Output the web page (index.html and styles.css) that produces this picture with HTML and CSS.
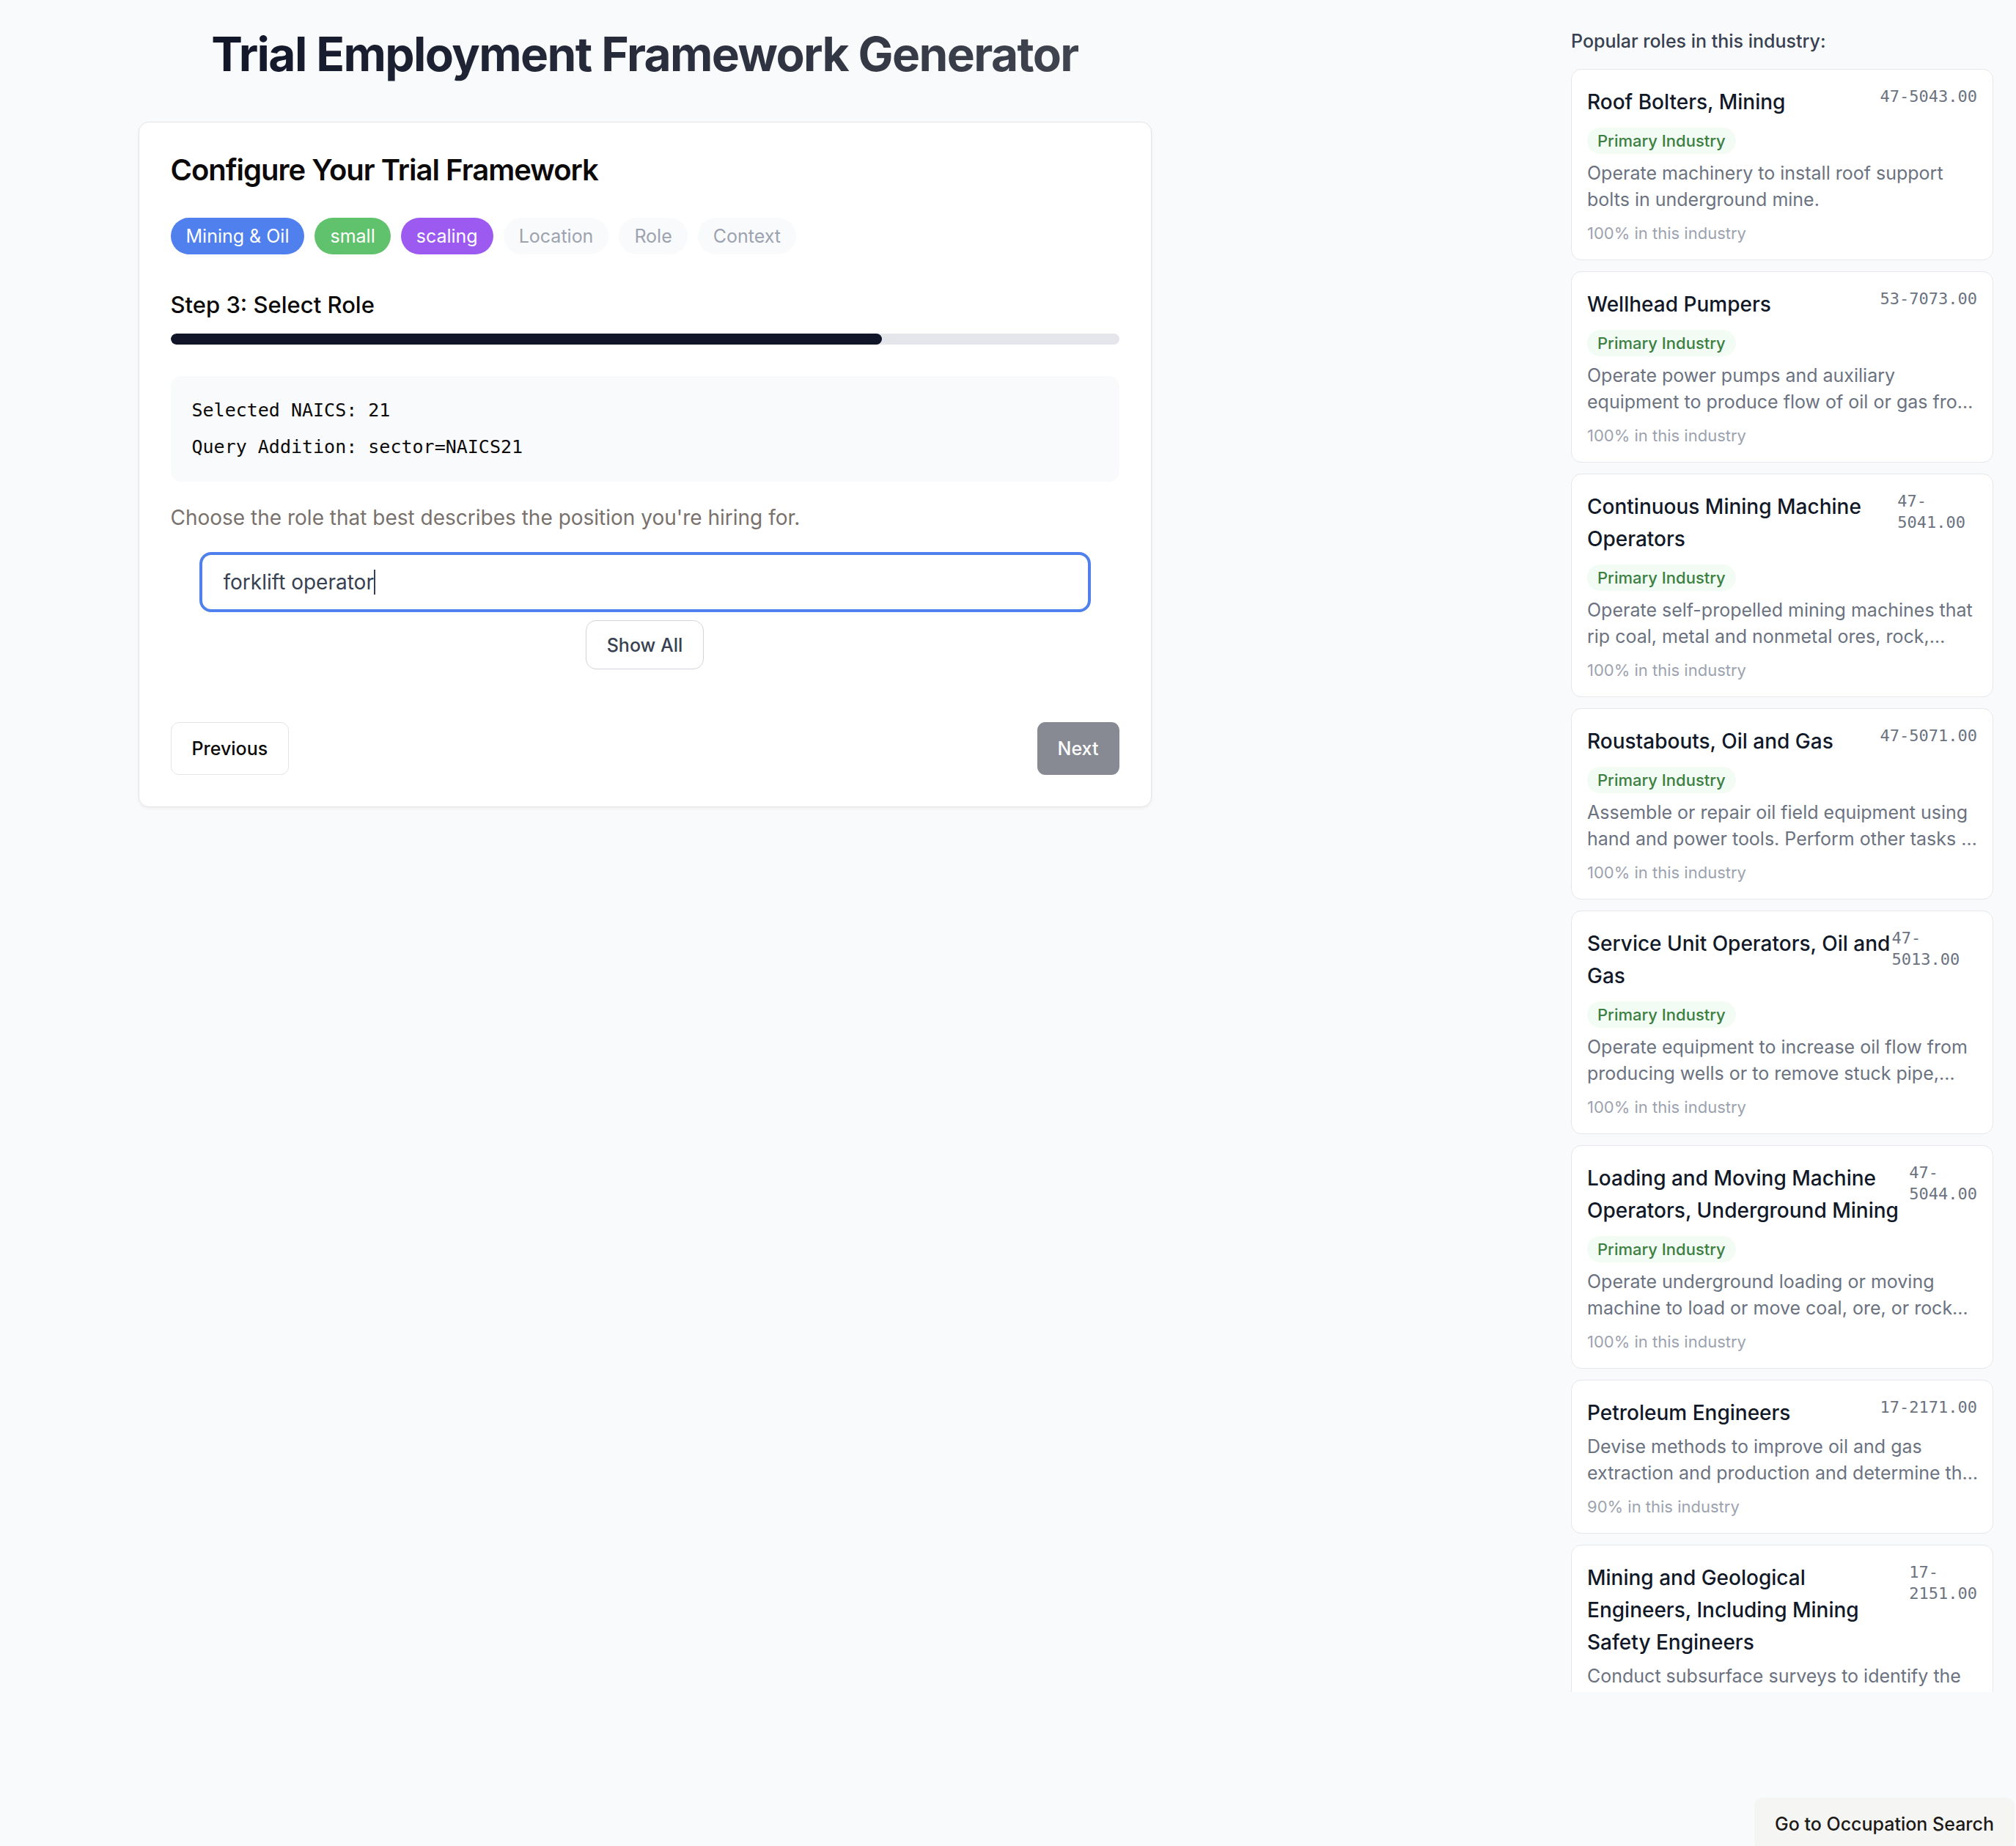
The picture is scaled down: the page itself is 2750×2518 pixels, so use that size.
FILE: index.html
```html
<!DOCTYPE html>
<html lang="en">
<head>
<meta charset="utf-8">
<meta name="viewport" content="width=device-width, initial-scale=1">
<title>Trial Employment Framework Generator</title>
<link rel="stylesheet" href="styles.css">
</head>
<body>
<div class="page">
  <main class="main">
    <h1 class="page-title">Trial Employment Framework Generator</h1>
    <section class="card">
      <h2 class="card-title">Configure Your Trial Framework</h2>
      <ul class="chips">
        <li class="chip chip-blue">Mining &amp; Oil</li>
        <li class="chip chip-green">small</li>
        <li class="chip chip-purple">scaling</li>
        <li class="chip">Location</li>
        <li class="chip">Role</li>
        <li class="chip">Context</li>
      </ul>
      <h3 class="step-title">Step 3: Select Role</h3>
      <div class="progress" role="progressbar" aria-label="Progress" aria-valuenow="75" aria-valuemin="0" aria-valuemax="100">
        <div class="progress-fill" style="width: 75%"></div>
      </div>
      <div class="query">
        <p>Selected NAICS: 21</p>
        <p>Query Addition: sector=NAICS21</p>
      </div>
      <label class="hint" for="role">Choose the role that best describes the position you're hiring for.</label>
      <div class="search">
        <div class="search-field">
          <input class="search-input" id="role" type="text" value="forklift operator" autocomplete="off" spellcheck="false">
          <span class="caret"></span>
        </div>
        <button class="btn btn-show" type="button">Show All</button>
      </div>
      <div class="actions">
        <button class="btn btn-outline" type="button">Previous</button>
        <button class="btn btn-primary" type="button" disabled>Next</button>
      </div>
    </section>
  </main>
  <aside class="sidebar">
    <h2 class="sidebar-title">Popular roles in this industry:</h2>
    <ul class="roles">
      <li><button class="role" type="button">
        <span class="role-head"><span class="role-name">Roof Bolters, Mining</span><span class="role-code">47-5043.00</span></span>
        <span class="badge">Primary Industry</span>
        <span class="role-text">Operate machinery to install roof support bolts in underground mine.</span>
        <span class="role-share">100% in this industry</span>
      </button></li>
      <li><button class="role" type="button">
        <span class="role-head"><span class="role-name">Wellhead Pumpers</span><span class="role-code">53-7073.00</span></span>
        <span class="badge">Primary Industry</span>
        <span class="role-text">Operate power pumps and auxiliary equipment to produce flow of oil or gas fro…</span>
        <span class="role-share">100% in this industry</span>
      </button></li>
      <li><button class="role" type="button">
        <span class="role-head"><span class="role-name">Continuous Mining Machine Operators</span><span class="role-code">47-5041.00</span></span>
        <span class="badge">Primary Industry</span>
        <span class="role-text">Operate self-propelled mining machines that rip coal, metal and nonmetal ores, rock,…</span>
        <span class="role-share">100% in this industry</span>
      </button></li>
      <li><button class="role" type="button">
        <span class="role-head"><span class="role-name">Roustabouts, Oil and Gas</span><span class="role-code">47-5071.00</span></span>
        <span class="badge">Primary Industry</span>
        <span class="role-text">Assemble or repair oil field equipment using hand and power tools. Perform other tasks …</span>
        <span class="role-share">100% in this industry</span>
      </button></li>
      <li><button class="role" type="button">
        <span class="role-head"><span class="role-name">Service Unit Operators, Oil and Gas</span><span class="role-code">47-5013.00</span></span>
        <span class="badge">Primary Industry</span>
        <span class="role-text">Operate equipment to increase oil flow from producing wells or to remove stuck pipe,…</span>
        <span class="role-share">100% in this industry</span>
      </button></li>
      <li><button class="role" type="button">
        <span class="role-head"><span class="role-name">Loading and Moving Machine Operators, Underground Mining</span><span class="role-code">47-5044.00</span></span>
        <span class="badge">Primary Industry</span>
        <span class="role-text">Operate underground loading or moving machine to load or move coal, ore, or rock…</span>
        <span class="role-share">100% in this industry</span>
      </button></li>
      <li><button class="role" type="button">
        <span class="role-head"><span class="role-name">Petroleum Engineers</span><span class="role-code">17-2171.00</span></span>
        <span class="role-text">Devise methods to improve oil and gas extraction and production and determine th…</span>
        <span class="role-share">90% in this industry</span>
      </button></li>
      <li><button class="role" type="button">
        <span class="role-head"><span class="role-name">Mining and Geological Engineers, Including Mining Safety Engineers</span><span class="role-code">17-2151.00</span></span>
        <span class="role-text">Conduct subsurface surveys to identify the</span>
      </button></li>
    </ul>
  </aside>
</div>
<a class="jump" href="#search">Go to Occupation Search</a>
</body>
</html>
```
FILE: styles.css
```css
*, *::before, *::after { box-sizing: border-box; }

body, h1, h2, h3, p, ul { margin: 0; padding: 0; }
ul { list-style: none; }

body {
  background: #f9fafc;
  color: #0c0a09;
  font-family: Inter, "Liberation Sans", sans-serif;
  font-size: 28px;
}

button, input { font: inherit; color: inherit; }

.page {
  display: grid;
  grid-template-columns: minmax(0, 1fr) 576px;
  column-gap: 384px;
  align-items: start;
  padding: 29px 31px 0 0;
}

.main {
  display: flex;
  flex-direction: column;
  align-items: center;
}

.page-title {
  margin-bottom: 47px;
  font-size: 64px;
  line-height: 90px;
  font-weight: 700;
  letter-spacing: -0.025em;
  background: linear-gradient(90deg, #111629, #40444f);
  -webkit-background-clip: text;
  background-clip: text;
  color: transparent;
}

.card {
  width: 100%;
  max-width: 1382px;
  padding: 43px;
  background: #fff;
  border: 1px solid #e7e5e4;
  border-radius: 14px;
  box-shadow: 0 2px 4px rgba(0, 0, 0, 0.05);
}

.card-title {
  font-size: 40px;
  line-height: 44px;
  font-weight: 600;
  letter-spacing: -0.025em;
}

.chips {
  display: flex;
  flex-wrap: wrap;
  gap: 14px;
  margin: 43px 0 44px;
}

.chip {
  padding: 7px 21px;
  border-radius: 25px;
  background: #f9fafc;
  color: #9ca3af;
  font-size: 25px;
  line-height: 36px;
}
.chip-blue { background: #4f80ee; color: #fff; }
.chip-green { background: #60c26c; color: #fff; }
.chip-purple { background: #9d5af0; color: #fff; }

.step-title {
  margin-bottom: 14px;
  font-size: 31px;
  line-height: 50px;
  font-weight: 500;
}

.progress {
  height: 15px;
  margin-bottom: 43px;
  overflow: hidden;
  border-radius: 8px;
  background: #e5e6eb;
}
.progress-fill {
  height: 100%;
  border-radius: 8px;
  background: #101628;
}

.query {
  display: grid;
  gap: 14px;
  padding: 29px;
  border-radius: 14px;
  background: #f9fafc;
  font-family: "DejaVu Sans Mono", monospace;
  font-size: 25px;
  line-height: 36px;
}

.hint {
  display: block;
  margin: 29px 0 27px;
  color: #78716c;
  font-size: 28px;
  line-height: 40px;
}

.search {
  display: flex;
  flex-direction: column;
  align-items: center;
  gap: 11px;
  padding: 0 39px;
}

.search-field {
  position: relative;
  width: 100%;
}

.search-input {
  display: block;
  width: 100%;
  height: 82px;
  padding: 0 29px;
  border: 4px solid #4f80ee;
  border-radius: 16px;
  outline: none;
  background: #fff;
  color: #374151;
  caret-color: transparent;
  font-size: 28px;
}

.caret {
  position: absolute;
  top: 24px;
  left: 238px;
  width: 2px;
  height: 34px;
  background: #374151;
}

.btn {
  height: 72px;
  padding: 0 28px;
  border: 1px solid transparent;
  border-radius: 11px;
  background: #fff;
  font-size: 25px;
  line-height: 36px;
  font-weight: 500;
}
.btn-show {
  height: 67px;
  border-color: #d1d5db;
  border-radius: 14px;
  color: #374151;
}
.btn-outline { border-color: #e7e5e4; }
.btn-primary { border: 0; background: #878a93; color: #fff; }

.actions {
  display: flex;
  justify-content: space-between;
  margin-top: 72px;
}

.sidebar { padding-top: 9px; }

.sidebar-title {
  margin-bottom: 20px;
  color: #374151;
  font-size: 25px;
  line-height: 36px;
  font-weight: 500;
}

.roles {
  display: flex;
  flex-direction: column;
  gap: 15px;
  max-height: calc(100vh - 304px);
  overflow-y: auto;
  scrollbar-width: none;
}

.role {
  display: flex;
  flex-direction: column;
  align-items: flex-start;
  width: 100%;
  padding: 22px 21px 21px;
  border: 1px solid #e5e7eb;
  border-radius: 14px;
  background: #fff;
  text-align: left;
}

.role-head {
  display: flex;
  justify-content: space-between;
  align-items: flex-start;
  width: 100%;
}
.role-name {
  color: #111827;
  font-size: 28px;
  line-height: 44px;
  font-weight: 500;
}
.role-code {
  color: #6b7280;
  font-family: "DejaVu Sans Mono", monospace;
  font-size: 22px;
  line-height: 29px;
}

.badge {
  margin: 13px 0 2px;
  padding: 0 14px;
  border-radius: 18px;
  background: #f2fcf5;
  color: #3c8041;
  font-size: 22px;
  line-height: 36px;
  font-weight: 500;
}

.role-text {
  margin: 6px -8px 14px 0;
  color: #6b7280;
  font-size: 25px;
  line-height: 36px;
}

.role-share {
  color: #9ca3af;
  font-size: 22px;
  line-height: 29px;
}

.jump {
  position: fixed;
  right: 2px;
  bottom: -6px;
  padding: 18px 28px;
  border-radius: 11px;
  background: #f5f5f4;
  color: #1c1917;
  font-size: 25px;
  line-height: 36px;
  font-weight: 500;
  text-decoration: none;
}
```
